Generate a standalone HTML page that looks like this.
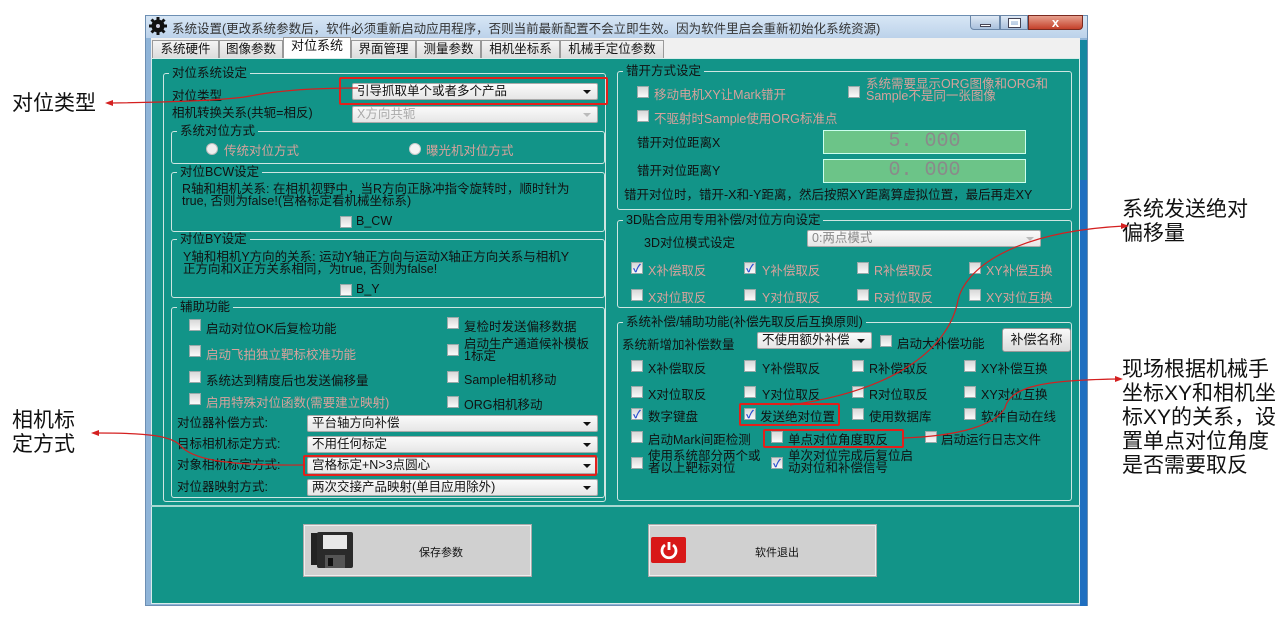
<!DOCTYPE html>
<html><head><meta charset="utf-8">
<style>
*{margin:0;padding:0;box-sizing:border-box}
body{width:1280px;height:620px;background:#fff;position:relative;overflow:hidden;font-family:"Liberation Sans","Noto Sans CJK SC",sans-serif;font-size:12.5px;color:#111}
.a{position:absolute;white-space:nowrap}
.grp{position:absolute;border:1.5px solid #cfe6e2;border-radius:3px}
.lg{position:absolute;background:#129488;padding:0 3px;font-size:12.5px;line-height:13px;color:#111}
.cb{position:absolute;width:12px;height:12px;background:linear-gradient(#d8d8d8,#fafafa);border:1px solid #9aa}
.ck::after{content:"✓";position:absolute;left:1px;top:-3px;font-size:11px;color:#2a4fd0;font-weight:bold}
.dis{color:#d8a29c}
.cmb{position:absolute;height:17px;background:linear-gradient(#fafafa,#e6e6e6);border:1px solid #aaa;border-radius:2px;font-size:12.5px;line-height:15px;padding-left:4px}
.cmb::after{content:"";position:absolute;right:6px;top:6px;border-left:4px solid transparent;border-right:4px solid transparent;border-top:4px solid #111}
.cmb.d{color:#aaa}.cmb.d::after{border-top-color:#bbb}
.rb{position:absolute;border:2.5px solid #e3201b;border-radius:2px}
.tab{position:absolute;top:40px;height:18px;border:1px solid #999;border-bottom:none;background:linear-gradient(#f4f4f4,#dcdcdc);font-size:12.5px;line-height:16px;text-align:center}
.ann{position:absolute;font-size:21px;line-height:24px;color:#111;white-space:nowrap}
</style></head><body>
<div class="a" style="left:145px;top:15px;width:943px;height:591px;background:#8fb4d8;border:1px solid #6d8fb3"></div>
<div class="a" style="left:146px;top:16px;width:941px;height:22px;background:linear-gradient(#d7e6f5,#bcd2ea)"></div>
<svg class="a" style="left:149px;top:17px" width="18" height="18" viewBox="0 0 18 18"><circle cx="9" cy="9" r="6.5" fill="#111"/><g stroke="#111" stroke-width="3"><line x1="9" y1="0" x2="9" y2="18"/><line x1="0" y1="9" x2="18" y2="9"/><line x1="2.5" y1="2.5" x2="15.5" y2="15.5"/><line x1="15.5" y1="2.5" x2="2.5" y2="15.5"/></g><circle cx="9" cy="9" r="2" fill="#ccd"/></svg>
<div class="a" style="left:172px;top:18px;font-size:12.5px;color:#333">系统设置(更改系统参数后，软件必须重新启动应用程序，否则当前最新配置不会立即生效。因为软件里启会重新初始化系统资源)</div>
<div class="a" style="left:970px;top:15px;width:30px;height:15px;background:linear-gradient(#dfe9f5,#a9c0dc);border:1px solid #6b87a8;border-radius:0 0 0 4px"><div class="a" style="left:9px;top:8px;width:11px;height:3px;background:#fff;border:1px solid #445"></div></div>
<div class="a" style="left:1000px;top:15px;width:28px;height:15px;background:linear-gradient(#dfe9f5,#a9c0dc);border:1px solid #6b87a8"><div class="a" style="left:8px;top:3px;width:11px;height:8px;border:2px solid #fff;outline:1px solid #445"></div></div>
<div class="a" style="left:1028px;top:15px;width:55px;height:15px;background:linear-gradient(#e7a08e,#c4402a);border:1px solid #7a2a20;border-radius:0 0 4px 0;color:#fff;font-weight:bold;text-align:center;line-height:13px;font-size:13px">x</div>
<div class="a" style="left:151px;top:38px;width:929px;height:20px;background:#f0f0f0"></div>
<div class="tab" style="left:152px;width:67px">系统硬件</div>
<div class="tab" style="left:219px;width:64px">图像参数</div>
<div class="tab" style="left:283px;top:37px;height:21px;width:68px;background:#fff;z-index:2;font-size:13px">对位系统</div>
<div class="tab" style="left:351px;width:65px">界面管理</div>
<div class="tab" style="left:416px;width:65px">测量参数</div>
<div class="tab" style="left:481px;width:79px">相机坐标系</div>
<div class="tab" style="left:560px;width:104px">机械手定位参数</div>
<div class="a" style="left:151px;top:58px;width:929px;height:546px;background:#129488;border:1px solid #d8ecea"></div>
<div class="a" style="left:1080px;top:40px;width:7px;height:566px;background:#1488a0"></div>
<div class="a" style="left:1080px;top:180px;width:7px;height:426px;background:#1f6fc0"></div>
<div class="a" style="left:151px;top:505px;width:929px;height:2px;background:#a8d8d2"></div>

<div class="grp" style="left:163px;top:73px;width:443px;height:429px"></div>
<div class="lg" style="left:169px;top:67px">对位系统设定</div>
<div class="a" style="left:172px;top:85px">对位类型</div>
<div class="cmb" style="left:352px;top:83px;width:246px">引导抓取单个或者多个产品</div>
<div class="rb" style="left:339px;top:77px;width:269px;height:28px"></div>
<div class="a" style="left:172px;top:102px">相机转换关系(共轭=相反)</div>
<div class="cmb d" style="left:352px;top:106px;width:246px">X方向共轭</div>

<div class="grp" style="left:171px;top:131px;width:434px;height:33px"></div>
<div class="lg" style="left:177px;top:125px">系统对位方式</div>
<div class="a" style="left:206px;top:143px;width:12px;height:12px;border-radius:50%;background:#eee;border:1px solid #bbb"></div>
<div class="a dis" style="left:224px;top:140px">传统对位方式</div>
<div class="a" style="left:409px;top:143px;width:12px;height:12px;border-radius:50%;background:#f4f4f4;border:1px solid #ccc"></div>
<div class="a dis" style="left:426px;top:140px">曝光机对位方式</div>

<div class="grp" style="left:171px;top:172px;width:434px;height:60px"></div>
<div class="lg" style="left:177px;top:166px">对位BCW设定</div>
<div class="a" style="left:182px;top:183px;line-height:12px">R轴和相机关系: 在相机视野中，当R方向正脉冲指令旋转时，顺时针为<br>true, 否则为false!(宫格标定看机械坐标系)</div>
<div class="cb" style="left:340px;top:216px"></div><div class="a" style="left:356px;top:214px">B_CW</div>

<div class="grp" style="left:171px;top:239px;width:434px;height:59px"></div>
<div class="lg" style="left:177px;top:233px">对位BY设定</div>
<div class="a" style="left:183px;top:251px;line-height:12px">Y轴和相机Y方向的关系: 运动Y轴正方向与运动X轴正方向关系与相机Y<br>正方向和X正方关系相同，为true, 否则为false!</div>
<div class="cb" style="left:340px;top:284px"></div><div class="a" style="left:356px;top:282px">B_Y</div>

<div class="grp" style="left:171px;top:307px;width:434px;height:191px"></div>
<div class="lg" style="left:177px;top:301px">辅助功能</div>
<div class="cb" style="left:189px;top:319px"></div><div class="a" style="left:206px;top:318px">启动对位OK后复检功能</div>
<div class="cb" style="left:189px;top:345px"></div><div class="a dis" style="left:206px;top:344px">启动飞拍独立靶标校准功能</div>
<div class="cb" style="left:189px;top:371px"></div><div class="a" style="left:206px;top:370px">系统达到精度后也发送偏移量</div>
<div class="cb" style="left:189px;top:393px"></div><div class="a dis" style="left:206px;top:392px">启用特殊对位函数(需要建立映射)</div>
<div class="cb" style="left:447px;top:317px"></div><div class="a" style="left:464px;top:316px">复检时发送偏移数据</div>
<div class="cb" style="left:447px;top:344px"></div><div class="a" style="left:464px;top:338px;line-height:12px">启动生产通道候补模板<br>1标定</div>
<div class="cb" style="left:447px;top:371px"></div><div class="a" style="left:464px;top:369px">Sample相机移动</div>
<div class="cb" style="left:447px;top:396px"></div><div class="a" style="left:464px;top:394px">ORG相机移动</div>
<div class="a" style="left:177px;top:412px">对位器补偿方式:</div>
<div class="cmb" style="left:307px;top:415px;width:291px">平台轴方向补偿</div>
<div class="a" style="left:177px;top:433px">目标相机标定方式:</div>
<div class="cmb" style="left:307px;top:436px;width:291px">不用任何标定</div>
<div class="a" style="left:177px;top:454px">对象相机标定方式:</div>
<div class="cmb" style="left:307px;top:457px;width:291px">宫格标定+N&gt;3点圆心</div>
<div class="rb" style="left:303px;top:455px;width:294px;height:21px"></div>
<div class="a" style="left:177px;top:476px">对位器映射方式:</div>
<div class="cmb" style="left:307px;top:479px;width:291px">两次交接产品映射(单目应用除外)</div>

<div class="grp" style="left:617px;top:71px;width:455px;height:139px"></div>
<div class="lg" style="left:623px;top:65px">错开方式设定</div>
<div class="cb" style="left:637px;top:86px"></div><div class="a dis" style="left:654px;top:84px">移动电机XY让Mark错开</div>
<div class="cb" style="left:848px;top:86px"></div><div class="a dis" style="left:866px;top:78px;line-height:12px">系统需要显示ORG图像和ORG和<br>Sample不是同一张图像</div>
<div class="cb" style="left:637px;top:110px"></div><div class="a dis" style="left:654px;top:108px">不驱射时Sample使用ORG标准点</div>
<div class="a" style="left:637px;top:132px">错开对位距离X</div>
<div class="a" style="left:823px;top:130px;width:203px;height:24px;background:#6cc488;border:1px solid #cfe;font-size:20px;line-height:22px;text-align:center;color:#8a8a8a;font-family:'Liberation Mono',monospace">5. 000</div>
<div class="a" style="left:637px;top:160px">错开对位距离Y</div>
<div class="a" style="left:823px;top:159px;width:203px;height:24px;background:#6cc488;border:1px solid #cfe;font-size:20px;line-height:22px;text-align:center;color:#8a8a8a;font-family:'Liberation Mono',monospace">0. 000</div>
<div class="a" style="left:624px;top:184px">错开对位时，错开-X和-Y距离，然后按照XY距离算虚拟位置，最后再走XY</div>

<div class="grp" style="left:617px;top:220px;width:455px;height:88px"></div>
<div class="lg" style="left:623px;top:214px">3D贴合应用专用补偿/对位方向设定</div>
<div class="a" style="left:644px;top:232px">3D对位模式设定</div>
<div class="cmb d" style="left:807px;top:230px;width:234px;color:#888">0:两点模式</div>
<div class="cb ck" style="left:631px;top:262px"></div><div class="a dis" style="left:648px;top:260px">X补偿取反</div>
<div class="cb ck" style="left:744px;top:262px"></div><div class="a dis" style="left:762px;top:260px">Y补偿取反</div>
<div class="cb" style="left:857px;top:262px"></div><div class="a dis" style="left:874px;top:260px">R补偿取反</div>
<div class="cb" style="left:969px;top:262px"></div><div class="a dis" style="left:986px;top:260px">XY补偿互换</div>
<div class="cb" style="left:631px;top:289px"></div><div class="a dis" style="left:648px;top:287px">X对位取反</div>
<div class="cb" style="left:744px;top:289px"></div><div class="a dis" style="left:762px;top:287px">Y对位取反</div>
<div class="cb" style="left:857px;top:289px"></div><div class="a dis" style="left:874px;top:287px">R对位取反</div>
<div class="cb" style="left:969px;top:289px"></div><div class="a dis" style="left:986px;top:287px">XY对位互换</div>

<div class="grp" style="left:617px;top:322px;width:455px;height:179px"></div>
<div class="lg" style="left:623px;top:316px">系统补偿/辅助功能(补偿先取反后互换原则)</div>
<div class="a" style="left:622px;top:334px">系统新增加补偿数量</div>
<div class="cmb" style="left:757px;top:332px;width:115px">不使用额外补偿</div>
<div class="cb" style="left:880px;top:335px"></div><div class="a" style="left:897px;top:333px">启动大补偿功能</div>
<div class="a" style="left:1002px;top:328px;width:69px;height:24px;background:linear-gradient(#f8f8f8,#dcdcdc);border:1px solid #999;border-radius:3px;text-align:center;line-height:22px;font-size:13px">补偿名称</div>
<div class="cb" style="left:631px;top:360px"></div><div class="a" style="left:648px;top:358px">X补偿取反</div>
<div class="cb" style="left:744px;top:360px"></div><div class="a" style="left:762px;top:358px">Y补偿取反</div>
<div class="cb" style="left:852px;top:360px"></div><div class="a" style="left:869px;top:358px">R补偿取反</div>
<div class="cb" style="left:964px;top:360px"></div><div class="a" style="left:981px;top:358px">XY补偿互换</div>
<div class="cb" style="left:631px;top:386px"></div><div class="a" style="left:648px;top:384px">X对位取反</div>
<div class="cb" style="left:744px;top:386px"></div><div class="a" style="left:762px;top:384px">Y对位取反</div>
<div class="cb" style="left:852px;top:386px"></div><div class="a" style="left:869px;top:384px">R对位取反</div>
<div class="cb" style="left:964px;top:386px"></div><div class="a" style="left:981px;top:384px">XY对位互换</div>
<div class="cb ck" style="left:631px;top:408px"></div><div class="a" style="left:648px;top:406px">数字键盘</div>
<div class="cb ck" style="left:744px;top:408px"></div><div class="a" style="left:760px;top:406px">发送绝对位置</div>
<div class="cb" style="left:852px;top:408px"></div><div class="a" style="left:869px;top:406px">使用数据库</div>
<div class="cb" style="left:964px;top:408px"></div><div class="a" style="left:981px;top:406px">软件自动在线</div>
<div class="rb" style="left:739px;top:403px;width:101px;height:23px"></div>
<div class="cb" style="left:631px;top:431px"></div><div class="a" style="left:648px;top:429px">启动Mark间距检测</div>
<div class="cb" style="left:771px;top:431px"></div><div class="a" style="left:788px;top:429px">单点对位角度取反</div>
<div class="rb" style="left:763px;top:429px;width:141px;height:19px"></div>
<div class="cb" style="left:925px;top:431px"></div><div class="a" style="left:941px;top:429px">启动运行日志文件</div>
<div class="cb" style="left:631px;top:457px"></div><div class="a" style="left:648px;top:450px;line-height:12px">使用系统部分两个或<br>者以上靶标对位</div>
<div class="cb ck" style="left:771px;top:457px"></div><div class="a" style="left:788px;top:450px;line-height:12px">单次对位完成后复位启<br>动对位和补偿信号</div>

<div class="a" style="left:303px;top:524px;width:229px;height:53px;background:#d0d0d0;border:1px solid #aaa;box-shadow:inset 0 0 0 1px #eee"></div>
<svg class="a" style="left:311px;top:531px" width="44" height="38" viewBox="0 0 44 38">
<rect x="0" y="2" width="8" height="32" fill="#222"/><rect x="6" y="1" width="36" height="36" rx="2" fill="#2a2a2a"/>
<rect x="12" y="4" width="24" height="14" fill="#e8e8e8"/><rect x="14" y="24" width="20" height="13" fill="#555"/><rect x="17" y="27" width="5" height="8" fill="#111"/></svg>
<div class="a" style="left:419px;top:544px;font-size:11px">保存参数</div>
<div class="a" style="left:648px;top:524px;width:229px;height:53px;background:#d0d0d0;border:1px solid #aaa;box-shadow:inset 0 0 0 1px #eee"></div>
<div class="a" style="left:651px;top:537px;width:35px;height:26px;background:#d81818;border-radius:2px"></div>
<svg class="a" style="left:659px;top:540px" width="20" height="20" viewBox="0 0 20 20"><path d="M6 5 A7 7 0 1 0 14 5" fill="none" stroke="#fff" stroke-width="2.8"/><line x1="10" y1="2" x2="10" y2="10" stroke="#fff" stroke-width="2.8"/></svg>
<div class="a" style="left:755px;top:544px;font-size:11px">软件退出</div>

<div class="ann" style="left:12px;top:92px">对位类型</div>
<div class="ann" style="left:12px;top:409px">相机标<br>定方式</div>
<div class="ann" style="left:1122px;top:198px">系统发送绝对<br>偏移量</div>
<div class="ann" style="left:1122px;top:358px">现场根据机械手<br>坐标XY和相机坐<br>标XY的关系，设<br>置单点对位角度<br>是否需要取反</div>
<svg class="a" style="left:0;top:0" width="1280" height="620">
<g fill="none" stroke="#d42020" stroke-width="1.2">
<path d="M112 103 C180 102 230 100 250 96 C270 92 300 88 358 88"/>
<path d="M98 433 C150 433 170 436 180 445 C190 458 220 466 305 465"/>
<path d="M1124 226 C1010 232 965 270 958 300 C950 345 900 390 790 405"/>
<path d="M1118 379 C1050 380 1010 385 1005 408 C995 425 960 436 903 438"/>
</g>
<g fill="#d42020"><path d="M105 103 l8 -3 l0 6z"/><path d="M91 433 l8 -3 l0 6z"/><path d="M1129 226 l-8 -3 l0 6z"/><path d="M1123 379 l-8 -3 l0 6z"/></g>
</svg>
</body></html>
